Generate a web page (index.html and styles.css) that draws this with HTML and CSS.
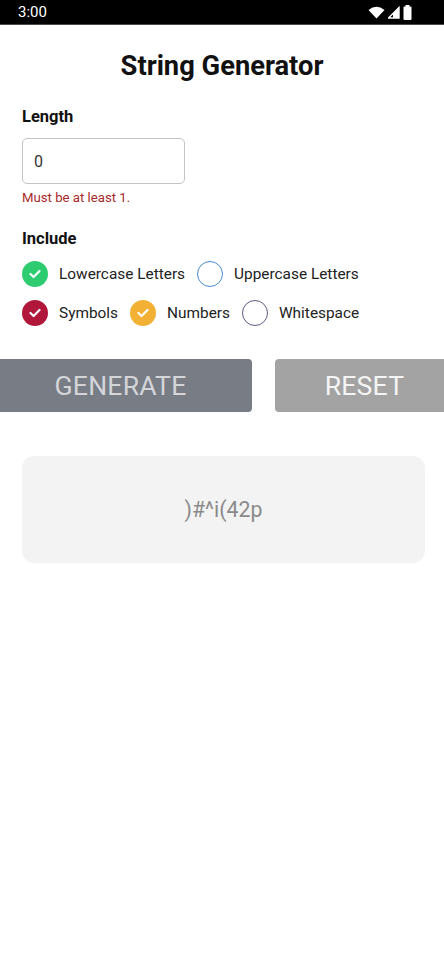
FILE: index.html
```html
<!DOCTYPE html>
<html>
<head>
<meta charset="utf-8">
<link rel="stylesheet" href="styles.css">
</head>
<body>
<div class="status">
  <span class="time">3:00</span>
  <span class="sicons">
    <svg width="17" height="13" viewBox="0 0 17 13"><path d="M0.5 4 Q8.5 -2.5 16.5 4 L8.5 12.5 Z" fill="#fff"/></svg>
    <svg width="12" height="13" viewBox="0 0 12 13"><path d="M11 1.5 L11 12 L0.5 12 Z" fill="none" stroke="#fff" stroke-width="1.4"/><path d="M11 1.5 L11 12 L5 12 L5 7.5 Z" fill="#fff"/></svg>
    <svg width="9" height="15" viewBox="0 0 9 15"><rect x="2.5" y="0" width="4" height="2" fill="#fff"/><rect x="0.5" y="1.5" width="8" height="13.5" rx="1" fill="#fff"/></svg>
  </span>
</div>
<main class="page">
  <h1 class="title">String Generator</h1>
  <div class="label">Length</div>
  <div class="input"><span>0</span></div>
  <div class="error">Must be at least 1.</div>
  <div class="label include">Include</div>
  <div class="opts">
    <div class="row">
      <span class="cb on green"><svg width="12" height="10" viewBox="0 0 12 10"><path d="M1.5 5 L4.6 8 L10.5 2" fill="none" stroke="#fff" stroke-width="2.2" stroke-linecap="round" stroke-linejoin="round"/></svg></span>
      <span class="txt">Lowercase Letters</span>
      <span class="cb off blue"></span>
      <span class="txt">Uppercase Letters</span>
    </div>
    <div class="row">
      <span class="cb on red"><svg width="12" height="10" viewBox="0 0 12 10"><path d="M1.5 5 L4.6 8 L10.5 2" fill="none" stroke="#fff" stroke-width="2.2" stroke-linecap="round" stroke-linejoin="round"/></svg></span>
      <span class="txt">Symbols</span>
      <span class="cb on orange"><svg width="12" height="10" viewBox="0 0 12 10"><path d="M1.5 5 L4.6 8 L10.5 2" fill="none" stroke="#fff" stroke-width="2.2" stroke-linecap="round" stroke-linejoin="round"/></svg></span>
      <span class="txt">Numbers</span>
      <span class="cb off purple"></span>
      <span class="txt">Whitespace</span>
    </div>
  </div>
</main>
<div class="buttons">
  <div class="btn gen">GENERATE</div>
  <div class="btn reset">RESET</div>
</div>
<div class="page">
  <div class="result">)#^i(42p</div>
</div>
</body>
</html>
```
FILE: styles.css
```css
html, body {
  margin: 0;
  padding: 0;
  background: #fff;
  font-family: Roboto, "Noto Sans", sans-serif;
  color: #111;
}
body {
  width: 444px;
  height: 965px;
  overflow: hidden;
}
.status {
  height: 24px;
  background: #000;
  border-bottom: 1px solid #4a4a4a;
  display: flex;
  align-items: center;
  justify-content: space-between;
  padding: 0 32px 0 18px;
  color: #fff;
}
.time {
  font-size: 15px;
  line-height: 24px;
}
.sicons {
  display: flex;
  align-items: center;
  gap: 3px;
}
.page {
  padding: 0 22px;
}
.title {
  margin: 25px 0 0;
  font-size: 27.3px;
  line-height: 32px;
  font-weight: 700;
  text-align: center;
  color: #111;
}
.label {
  margin-top: 25px;
  font-size: 16.5px;
  line-height: 20px;
  font-weight: 700;
}
.label.include {
  margin-top: 23px;
}
.input {
  margin-top: 11px;
  width: 163px;
  height: 46px;
  box-sizing: border-box;
  border: 1px solid #c4c4c4;
  border-radius: 5px;
  display: flex;
  align-items: center;
  padding-left: 11px;
  font-size: 16px;
  color: #333;
}
.error {
  margin-top: 6px;
  font-size: 13.2px;
  line-height: 16px;
  color: #a82a2a;
}
.opts {
  margin-top: 12px;
  display: flex;
  flex-direction: column;
  gap: 13px;
}
.row {
  display: flex;
  align-items: center;
  height: 26px;
}
.cb {
  width: 26px;
  height: 26px;
  border-radius: 50%;
  box-sizing: border-box;
  display: flex;
  align-items: center;
  justify-content: center;
  flex: none;
}
.cb.green { background: #2ecc71; }
.cb.red { background: #b0173b; }
.cb.orange { background: #f2b134; }
.cb.blue { border: 1.3px solid #4a8cd0; }
.cb.purple { border: 1.3px solid #5c5c84; }
.txt {
  font-size: 15.4px;
  color: #222;
  margin-left: 11px;
  margin-right: 12px;
}
.buttons {
  margin-top: 33px;
  display: flex;
  justify-content: center;
  gap: 23px;
  overflow: hidden;
  width: 444px;
}
.btn {
  flex: none;
  height: 53px;
  border-radius: 4px;
  display: flex;
  align-items: center;
  justify-content: center;
  font-size: 26.6px;
  letter-spacing: 0.2px;
}
.btn.gen {
  width: 262px;
  background: #787c85;
  color: #d3d5d9;
}
.btn.reset {
  width: 180px;
  background: #a4a3a4;
  color: #f4f4f4;
}
.result {
  margin-top: 44px;
  margin-right: -3px;
  height: 107px;
  background: #f3f3f3;
  border-radius: 12px;
  display: flex;
  align-items: center;
  justify-content: center;
  font-size: 21.3px;
  color: #8a8a8a;
}
```
